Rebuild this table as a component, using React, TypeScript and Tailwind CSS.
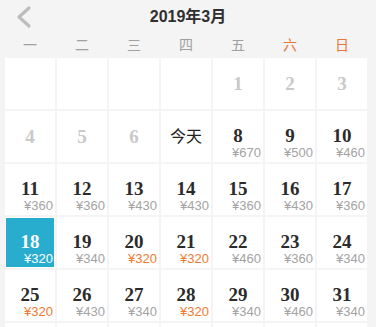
import React from 'react';

type Day = {
  label?: string;
  price?: number;
  past?: boolean;
  cheap?: boolean;
  today?: boolean;
  selected?: boolean;
};

const weekdays = ['一', '二', '三', '四', '五', '六', '日'];

const p = (n: number, price: number, cheap = false): Day => ({
  label: String(n),
  price,
  cheap,
});

const days: Day[] = [
  {}, {}, {}, {},
  { label: '1', past: true },
  { label: '2', past: true },
  { label: '3', past: true },
  { label: '4', past: true },
  { label: '5', past: true },
  { label: '6', past: true },
  { label: '今天', today: true },
  p(8, 670), p(9, 500), p(10, 460),
  p(11, 360), p(12, 360), p(13, 430), p(14, 430), p(15, 360), p(16, 430), p(17, 360),
  { label: '18', price: 320, selected: true },
  p(19, 340), p(20, 320, true), p(21, 320, true), p(22, 460), p(23, 360), p(24, 340),
  p(25, 320, true), p(26, 430), p(27, 340), p(28, 320, true), p(29, 340), p(30, 460), p(31, 340),
  {}, {}, {}, {}, {}, {}, {},
];

function DayCell({ day }: { day: Day }) {
  if (!day.label) {
    return <div className="bg-white" />;
  }

  if (day.past || day.today) {
    return (
      <div className="flex items-center justify-center bg-white">
        {day.today ? (
          <span className="text-[16px] leading-[20px] text-[#222]">{day.label}</span>
        ) : (
          <span className="font-['Liberation_Serif',serif] text-[19px] font-bold leading-[20px] text-[#c9c9c9]">
            {day.label}
          </span>
        )}
      </div>
    );
  }

  return (
    <div className={`border border-white ${day.selected ? 'bg-[#29adcf]' : 'bg-white'}`}>
      <div className="flex h-full flex-col pt-[14px]">
        <span
          className={`text-center font-['Liberation_Serif',serif] text-[19px] font-bold leading-[20px] ${
            day.selected ? 'text-white' : 'text-[#2b2b2b]'
          }`}
        >
          {day.label}
        </span>
        <span
          className={`pr-px text-right text-[13px] leading-[14px] ${
            day.selected ? 'text-white' : day.cheap ? 'text-[#f07a32]' : 'text-[#a3a3a3]'
          }`}
        >
          ¥{day.price}
        </span>
      </div>
    </div>
  );
}

export default function App() {
  return (
    <div className="h-[327px] overflow-hidden bg-[#f4f4f4] font-['Liberation_Sans','Noto_Sans_CJK_SC',sans-serif]">
      <div className="relative flex h-[34px] items-center justify-center">
        <svg
          className="absolute left-[15px] top-[5px]"
          width="18"
          height="24"
          viewBox="0 0 18 24"
          fill="none"
        >
          <polyline
            points="14,3 4,12 14,21"
            stroke="#bdbdbd"
            strokeWidth="3.2"
            strokeLinecap="round"
            strokeLinejoin="round"
          />
        </svg>
        <h1 className="text-[16px] font-bold text-[#2f2f2f]">2019年3月</h1>
      </div>

      <div className="grid h-[22px] grid-cols-[repeat(7,50px)] gap-x-[2px] px-[5px]">
        {weekdays.map((w, i) => (
          <div
            key={w}
            className={`flex items-center justify-center text-[14px] ${
              i >= 5 ? 'text-[#ea7434]' : 'text-[#a0a0a0]'
            }`}
          >
            {w}
          </div>
        ))}
      </div>

      <div className="mt-[2px] grid grid-cols-[repeat(7,50px)] auto-rows-[51px] gap-[2px] px-[5px]">
        {days.map((d, i) => (
          <DayCell key={i} day={d} />
        ))}
      </div>
    </div>
  );
}
